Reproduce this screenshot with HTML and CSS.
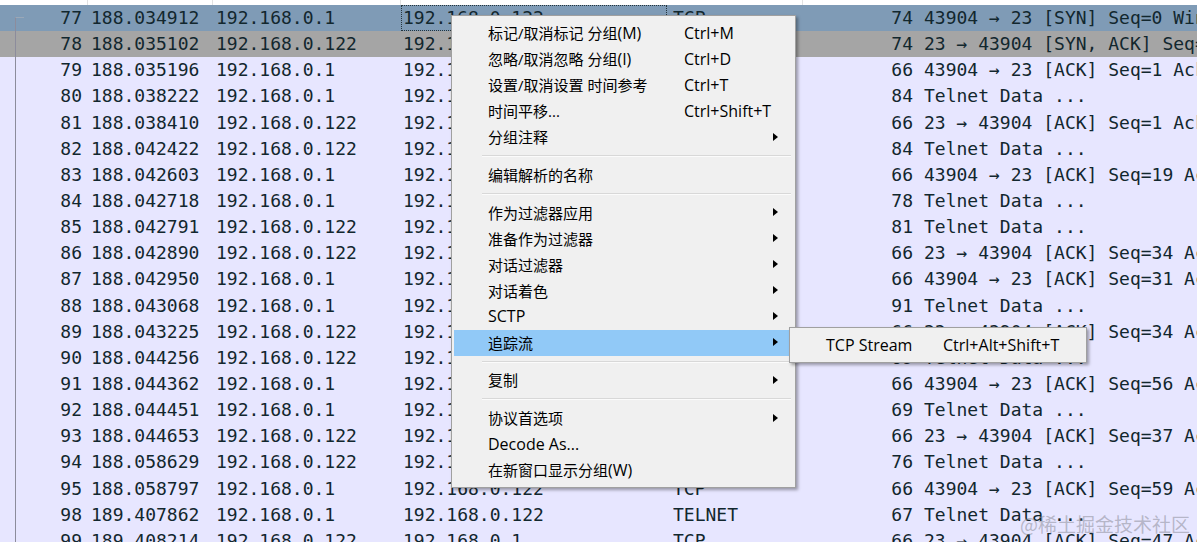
FILE: index.html
```html
<!DOCTYPE html>
<html lang="zh-CN">
<head>
    <meta charset="UTF-8">
    <meta name="viewport" content="width=device-width, initial-scale=1.0">
    <title>Packet List</title>
    <link rel="stylesheet" href="styles.css">
</head>
<body>

<div class="packets">
    <div class="head">
        <span class="h1"></span><span class="h2"></span><span class="h3"></span><span class="h4"></span>
    </div>

    <div class="row sel"><span class="num">77</span><span class="time">188.034912</span><span class="src">192.168.0.1</span><span class="dst focus">192.168.0.122</span><span class="proto">TCP</span><span class="len">74</span><span class="info">43904 → 23 [SYN] Seq=0 Win=64240 Len=0</span></div>
    <div class="row alt"><span class="num">78</span><span class="time">188.035102</span><span class="src">192.168.0.122</span><span class="dst">192.168.0.1</span><span class="proto">TCP</span><span class="len">74</span><span class="info">23 → 43904 [SYN, ACK] Seq=0 Ack=1 Win=65160</span></div>
    <div class="row"><span class="num">79</span><span class="time">188.035196</span><span class="src">192.168.0.1</span><span class="dst">192.168.0.122</span><span class="proto">TCP</span><span class="len">66</span><span class="info">43904 → 23 [ACK] Seq=1 Ack=1 Win=64256</span></div>
    <div class="row"><span class="num">80</span><span class="time">188.038222</span><span class="src">192.168.0.1</span><span class="dst">192.168.0.122</span><span class="proto">TELNET</span><span class="len">84</span><span class="info">Telnet Data ...</span></div>
    <div class="row"><span class="num">81</span><span class="time">188.038410</span><span class="src">192.168.0.122</span><span class="dst">192.168.0.1</span><span class="proto">TCP</span><span class="len">66</span><span class="info">23 → 43904 [ACK] Seq=1 Ack=19 Win=65152</span></div>
    <div class="row"><span class="num">82</span><span class="time">188.042422</span><span class="src">192.168.0.122</span><span class="dst">192.168.0.1</span><span class="proto">TELNET</span><span class="len">84</span><span class="info">Telnet Data ...</span></div>
    <div class="row"><span class="num">83</span><span class="time">188.042603</span><span class="src">192.168.0.1</span><span class="dst">192.168.0.122</span><span class="proto">TCP</span><span class="len">66</span><span class="info">43904 → 23 [ACK] Seq=19 Ack=19 Win=64256</span></div>
    <div class="row"><span class="num">84</span><span class="time">188.042718</span><span class="src">192.168.0.1</span><span class="dst">192.168.0.122</span><span class="proto">TELNET</span><span class="len">78</span><span class="info">Telnet Data ...</span></div>
    <div class="row"><span class="num">85</span><span class="time">188.042791</span><span class="src">192.168.0.122</span><span class="dst">192.168.0.1</span><span class="proto">TELNET</span><span class="len">81</span><span class="info">Telnet Data ...</span></div>
    <div class="row"><span class="num">86</span><span class="time">188.042890</span><span class="src">192.168.0.122</span><span class="dst">192.168.0.1</span><span class="proto">TCP</span><span class="len">66</span><span class="info">23 → 43904 [ACK] Seq=34 Ack=31 Win=65152</span></div>
    <div class="row"><span class="num">87</span><span class="time">188.042950</span><span class="src">192.168.0.1</span><span class="dst">192.168.0.122</span><span class="proto">TCP</span><span class="len">66</span><span class="info">43904 → 23 [ACK] Seq=31 Ack=34 Win=64256</span></div>
    <div class="row"><span class="num">88</span><span class="time">188.043068</span><span class="src">192.168.0.1</span><span class="dst">192.168.0.122</span><span class="proto">TELNET</span><span class="len">91</span><span class="info">Telnet Data ...</span></div>
    <div class="row"><span class="num">89</span><span class="time">188.043225</span><span class="src">192.168.0.122</span><span class="dst">192.168.0.1</span><span class="proto">TCP</span><span class="len">66</span><span class="info">23 → 43904 [ACK] Seq=34 Ack=56 Win=65152</span></div>
    <div class="row"><span class="num">90</span><span class="time">188.044256</span><span class="src">192.168.0.122</span><span class="dst">192.168.0.1</span><span class="proto">TELNET</span><span class="len">69</span><span class="info">Telnet Data ...</span></div>
    <div class="row"><span class="num">91</span><span class="time">188.044362</span><span class="src">192.168.0.1</span><span class="dst">192.168.0.122</span><span class="proto">TCP</span><span class="len">66</span><span class="info">43904 → 23 [ACK] Seq=56 Ack=37 Win=64256</span></div>
    <div class="row"><span class="num">92</span><span class="time">188.044451</span><span class="src">192.168.0.1</span><span class="dst">192.168.0.122</span><span class="proto">TELNET</span><span class="len">69</span><span class="info">Telnet Data ...</span></div>
    <div class="row"><span class="num">93</span><span class="time">188.044653</span><span class="src">192.168.0.122</span><span class="dst">192.168.0.1</span><span class="proto">TCP</span><span class="len">66</span><span class="info">23 → 43904 [ACK] Seq=37 Ack=59 Win=65152</span></div>
    <div class="row"><span class="num">94</span><span class="time">188.058629</span><span class="src">192.168.0.122</span><span class="dst">192.168.0.1</span><span class="proto">TELNET</span><span class="len">76</span><span class="info">Telnet Data ...</span></div>
    <div class="row"><span class="num">95</span><span class="time">188.058797</span><span class="src">192.168.0.1</span><span class="dst">192.168.0.122</span><span class="proto">TCP</span><span class="len">66</span><span class="info">43904 → 23 [ACK] Seq=59 Ack=47 Win=64256</span></div>
    <div class="row"><span class="num">98</span><span class="time">189.407862</span><span class="src">192.168.0.1</span><span class="dst">192.168.0.122</span><span class="proto">TELNET</span><span class="len">67</span><span class="info">Telnet Data ...</span></div>
    <div class="row"><span class="num">99</span><span class="time">189.408214</span><span class="src">192.168.0.122</span><span class="dst">192.168.0.1</span><span class="proto">TCP</span><span class="len">66</span><span class="info">23 → 43904 [ACK] Seq=47 Ack=60 Win=65152</span></div>
</div>

<!-- right-click menu on the selected packet -->
<div class="menu">
    <div class="item"><span class="label">标记/取消标记 分组<span class="en">(M)</span></span><span class="key">Ctrl+M</span></div>
    <div class="item"><span class="label">忽略/取消忽略 分组<span class="en">(I)</span></span><span class="key">Ctrl+D</span></div>
    <div class="item"><span class="label">设置/取消设置 时间参考</span><span class="key">Ctrl+T</span></div>
    <div class="item"><span class="label">时间平移...</span><span class="key">Ctrl+Shift+T</span></div>
    <div class="item"><span class="label">分组注释</span><span class="key"></span><i class="arrow"></i></div>
    <div class="sep"></div>
    <div class="item"><span class="label">编辑解析的名称</span></div>
    <div class="sep"></div>
    <div class="item"><span class="label">作为过滤器应用</span><span class="key"></span><i class="arrow"></i></div>
    <div class="item"><span class="label">准备作为过滤器</span><span class="key"></span><i class="arrow"></i></div>
    <div class="item"><span class="label">对话过滤器</span><span class="key"></span><i class="arrow"></i></div>
    <div class="item"><span class="label">对话着色</span><span class="key"></span><i class="arrow"></i></div>
    <div class="item"><span class="label en">SCTP</span><span class="key"></span><i class="arrow"></i></div>
    <div class="item hot"><span class="label">追踪流</span><span class="key"></span><i class="arrow"></i></div>
    <div class="sep"></div>
    <div class="item"><span class="label">复制</span><span class="key"></span><i class="arrow"></i></div>
    <div class="sep"></div>
    <div class="item"><span class="label">协议首选项</span><span class="key"></span><i class="arrow"></i></div>
    <div class="item"><span class="label en">Decode As...</span></div>
    <div class="item"><span class="label">在新窗口显示分组<span class="en">(W)</span></span></div>
</div>

<div class="submenu">
    <div class="item"><span class="label en">TCP Stream</span><span class="key">Ctrl+Alt+Shift+T</span></div>
</div>

<div class="mark">@稀土掘金技术社区</div>

</body>
</html>
```

FILE: styles.css
```css
body {
    margin: 0;
    width: 1197px;
    height: 542px;
    overflow: hidden;
    position: relative;
    background-color: #e7e6ff;
    font-family: "DejaVu Sans Mono", monospace;
}

.packets {
    position: relative;
}

/* conversation bracket on the left */
.packets::before {
    content: '';
    position: absolute;
    left: 15px;
    top: 17px;
    bottom: 0;
    width: 8px;
    border-left: 1px solid #8c8c9c;
    border-top: 1px solid #9aa8b8;
}

.head {
    display: flex;
    height: 5px;
    background-color: white;
}

.head span {
    box-sizing: border-box;
    border-right: 1px solid #e2e2e2;
}

.h1 { width: 88px; }
.h2 { width: 125px; }
.h3 { width: 188px; }
.h4 { width: 402px; }

.row {
    display: grid;
    grid-template-columns: 82px 134px 185px 272px 218px 22px 1fr;
    height: 26.15px;
    line-height: 26.15px;
    font-size: 18px;
    color: #12272e;
    white-space: nowrap;
}

.row span {
    overflow: hidden;
}

.num { text-align: right; }
.time { padding-left: 9px; }
.dst { padding-left: 2px; }
.len { text-align: right; }
.info { padding-left: 11px; }

.sel { background-color: #7f9bb6; }
.alt { background-color: #a5a5a5; }

.focus {
    outline: 1px dotted #24343c;
    outline-offset: -1px;
    margin-right: 6px;
}

.menu, .submenu {
    position: absolute;
    box-sizing: border-box;
    padding: 4px 2px;
    background-color: #f0f0f0;
    border: 1px solid #a0a0a0;
    box-shadow: 2px 2px 3px rgba(0, 0, 0, 0.35);
    font-family: "Open Sans", "Noto Sans CJK SC", sans-serif;
    font-size: 15px;
    color: #000;
}

.menu {
    left: 451px;
    top: 15px;
    width: 345px;
}

.submenu {
    left: 789px;
    top: 327px;
    width: 298px;
}

.item {
    box-sizing: border-box;
    display: flex;
    align-items: center;
    height: 26px;
    padding: 0 15px 1px 34px;
    white-space: nowrap;
}

.menu .label { width: 196px; }
.submenu .label { width: 117px; }

.key {
    flex: 1;
    font-size: 16px;
}

/* latin runs are set a touch larger than the CJK text */
.en { font-size: 16px; }

.hot { background-color: #91c9f7; }

.arrow {
    width: 0;
    height: 0;
    border-left: 5px solid #000;
    border-top: 4.5px solid transparent;
    border-bottom: 4.5px solid transparent;
}

.sep {
    position: relative;
    height: 11.75px;
}

.sep::after {
    content: '';
    position: absolute;
    left: 28px;
    right: 2px;
    top: 5px;
    border-top: 1px solid #d8d8d8;
    border-bottom: 1px solid #fbfbfb;
}

.mark {
    position: absolute;
    right: 7px;
    bottom: 7px;
    font-family: "Noto Sans CJK SC", sans-serif;
    font-size: 19px;
    line-height: 22px;
    color: rgba(140, 140, 152, 0.55);
}
```
